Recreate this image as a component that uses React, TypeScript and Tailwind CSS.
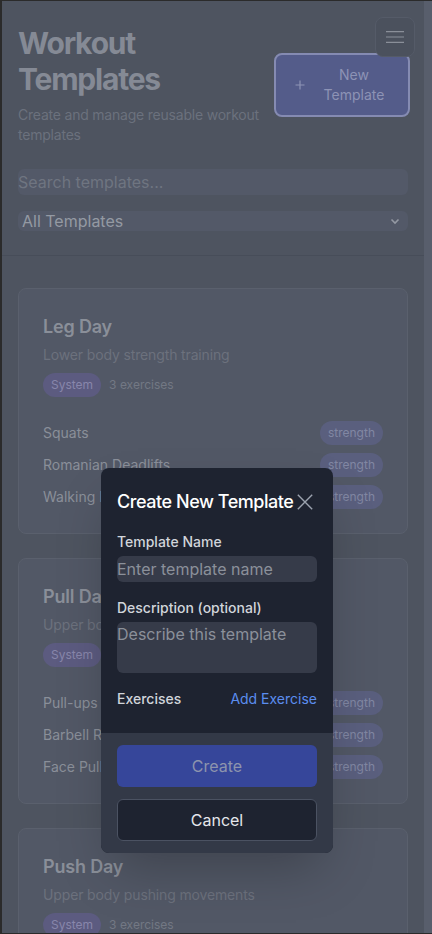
import React from 'react';

interface Template {
  name: string;
  description: string;
  exercises: string[];
}

const templates: Template[] = [
  {
    name: 'Leg Day',
    description: 'Lower body strength training',
    exercises: ['Squats', 'Romanian Deadlifts', 'Walking Lunges'],
  },
  {
    name: 'Pull Day',
    description: 'Upper body pulling movements',
    exercises: ['Pull-ups', 'Barbell Rows', 'Face Pulls'],
  },
  {
    name: 'Push Day',
    description: 'Upper body pushing movements',
    exercises: ['Bench Press', 'Overhead Press', 'Dips'],
  },
];

const TemplateCard: React.FC<{ template: Template }> = ({ template }) => (
  <div className="rounded-lg border border-[#5a606d] bg-[#525866] p-6">
    <h3 className="text-lg font-semibold leading-7 tracking-[-0.01em] text-[#8a8f99]">{template.name}</h3>
    <p className="mt-1 text-sm tracking-[-0.01em] text-[#6c717d]">{template.description}</p>
    <div className="mt-2 flex items-center gap-2">
      <span className="rounded-full bg-[#5c5b80] px-2 py-1 text-xs text-[#8886ab]">System</span>
      <span className="text-xs text-[#737884]">{template.exercises.length} exercises</span>
    </div>
    <div className="mt-6 flex flex-col gap-2">
      {template.exercises.map((ex) => (
        <div key={ex} className="flex h-6 items-center justify-between">
          <span className="text-sm text-[#8a8f99]">{ex}</span>
          <span className="rounded-full bg-[#5a5f7e] px-2 py-1 text-xs text-[#8187a3]">strength</span>
        </div>
      ))}
    </div>
  </div>
);

export default function App() {
  return (
    <div className="relative flex h-[934px] w-[432px] overflow-hidden border-t border-b border-l-2 border-[#2b2b2b] bg-[#4e5460] font-['Inter',sans-serif]">
      <main className="flex-1">
        {/* Header */}
        <div className="border-b border-[#474d59] px-4 pt-6 pb-6">
          <div className="flex items-center justify-between gap-3">
            <div className="flex-1">
              <h1 className="text-3xl font-bold tracking-[-0.04em] text-[#858a95]">Workout Templates</h1>
              <p className="mt-2 text-sm tracking-[-0.015em] text-[#6b717d]">Create and manage reusable workout templates</p>
            </div>
            <button className="-mr-0.5 flex w-[136px] shrink-0 items-center gap-2 rounded-lg border-2 border-[#858bb2] bg-[#545c8a] px-4 py-2.5 text-sm text-[#8d93b5]">
              <svg width="16" height="16" viewBox="0 0 16 16" fill="none" stroke="currentColor" strokeWidth="1.2">
                <path d="M8 3.5v9M3.5 8h9" />
              </svg>
              <span className="flex-1 text-center">New Template</span>
            </button>
          </div>

          <input
            className="mt-6 block h-[26px] w-full rounded-md bg-[#535968] text-base text-[#9499a3] outline-none placeholder:text-[#6f7581]"
            placeholder="Search templates..."
          />
          <div className="mt-4 flex h-5 items-center justify-between rounded-md bg-[#535968] pr-2 pl-1">
            <span className="text-base text-[#9499a3]">All Templates</span>
            <svg width="10" height="10" viewBox="0 0 10 10" fill="none" stroke="#9499a3" strokeWidth="1.6">
              <path d="M1.5 3.5L5 7l3.5-3.5" />
            </svg>
          </div>
        </div>

        {/* Template list */}
        <div className="flex flex-col gap-6 px-4 pt-8">
          {templates.map((t) => (
            <TemplateCard key={t.name} template={t} />
          ))}
        </div>
      </main>
      <div className="w-2 bg-[#585e6c]" />

      {/* Floating menu */}
      <button className="absolute top-4 right-[17px] flex h-10 w-10 items-center justify-center rounded-lg border border-[#555b68] bg-[#4b515d]">
        <svg width="18" height="12" viewBox="0 0 18 12" fill="none" stroke="#8a8f99" strokeWidth="1.2">
          <path d="M0 0.6h18M0 6h18M0 11.4h18" />
        </svg>
      </button>

      {/* Modal */}
      <div className="absolute inset-0 flex justify-center pt-[467px]">
        <div className="h-fit w-[232px] overflow-hidden rounded-lg bg-[#1e2330] shadow-2xl">
          <div className="px-4 pt-5 pb-6">
            <div className="flex items-center justify-between">
              <h2 className="whitespace-nowrap text-lg font-medium leading-7 tracking-[-0.025em] text-white">Create New Template</h2>
              <svg width="16" height="16" viewBox="0 0 16 16" fill="none" stroke="#9ca3af" strokeWidth="1.4" className="mr-1 shrink-0">
                <path d="M0.8 0.8l14.4 14.4M15.2 0.8L0.8 15.2" />
              </svg>
            </div>

            <label className="mt-4 block text-sm font-medium text-[#d1d5db]">Template Name</label>
            <input
              className="mt-1 block h-[26px] w-full rounded-md bg-[#363b49] text-base text-white outline-none placeholder:text-[#8b909a]"
              placeholder="Enter template name"
            />

            <label className="mt-4 block text-sm font-medium text-[#d1d5db]">Description (optional)</label>
            <textarea
              className="mt-1 block h-[51px] w-full resize-none rounded-md bg-[#363b49] text-base text-white outline-none placeholder:text-[#8b909a]"
              placeholder="Describe this template"
            />

            <div className="mt-4 flex items-center justify-between">
              <span className="text-sm font-medium text-[#d1d5db]">Exercises</span>
              <span className="text-sm text-[#5b8def]">Add Exercise</span>
            </div>
          </div>

          <div className="flex flex-col gap-3 bg-[#333947] px-4 py-3">
            <button className="h-[42px] w-full rounded-md bg-[#36469a] text-base text-[#8d94ad]">Create</button>
            <button className="h-[42px] w-full rounded-md border border-[#4b5262] bg-[#1e2330] text-base text-[#e5e7eb]">Cancel</button>
          </div>
        </div>
      </div>
    </div>
  );
}
